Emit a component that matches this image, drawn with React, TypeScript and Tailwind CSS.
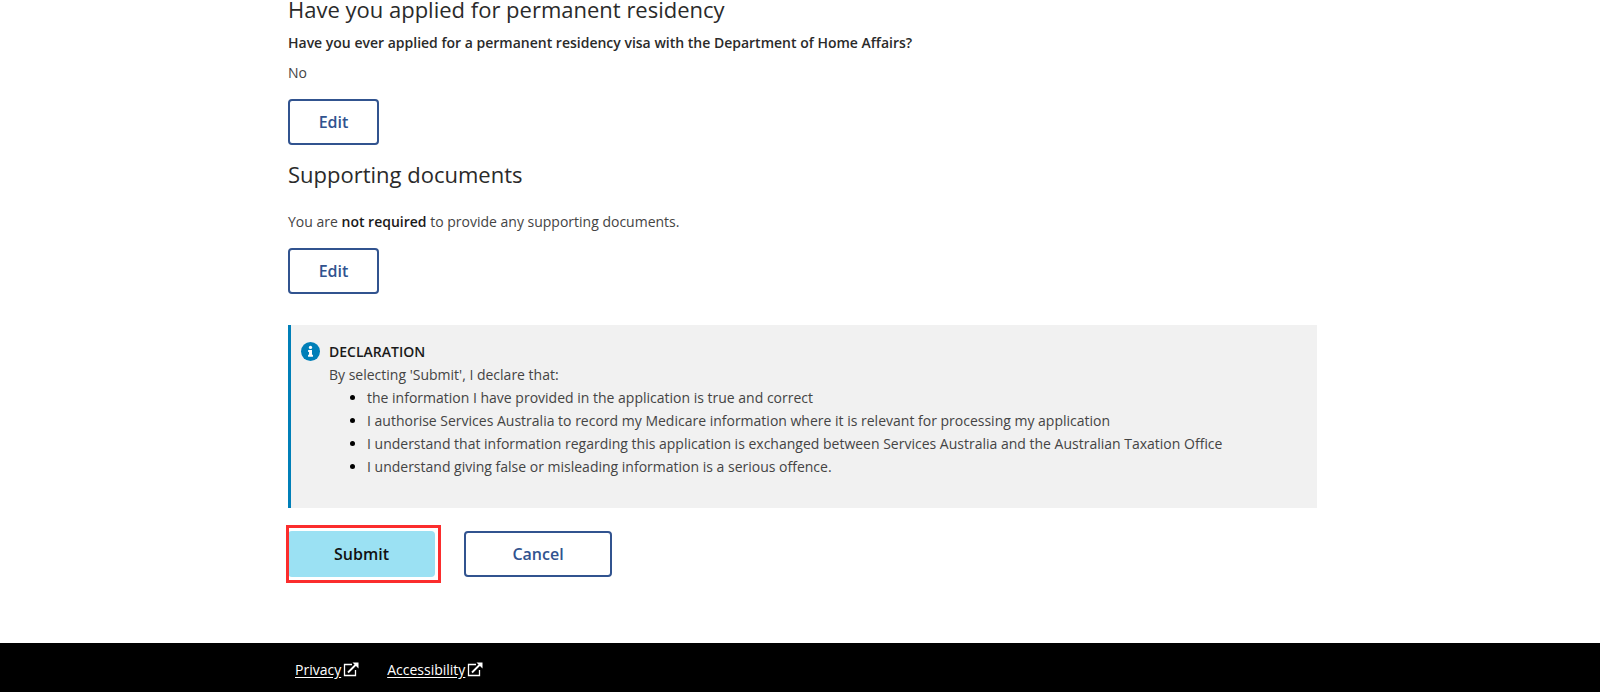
import type { ReactNode } from "react";

const declarations = [
  "the information I have provided in the application is true and correct",
  "I authorise Services Australia to record my Medicare information where it is relevant for processing my application",
  "I understand that information regarding this application is exchanged between Services Australia and the Australian Taxation Office",
  "I understand giving false or misleading information is a serious offence.",
];

const footerLinks = ["Privacy", "Accessibility"];

const OutlineButton = ({ children, wide = false }: { children: ReactNode; wide?: boolean }) => (
  <button
    type="button"
    className={`h-[46px] rounded-[4px] border-2 border-[#31538f] bg-white text-base font-semibold text-[#31538f] ${
      wide ? "w-[148px]" : "w-[91px]"
    }`}
  >
    {children}
  </button>
);

const InfoIcon = () => (
  <svg viewBox="0 0 512 512" className="h-[19px] w-[19px]" aria-hidden="true">
    <circle cx="256" cy="256" r="256" fill="#007fb8" />
    <circle cx="256" cy="145" r="44" fill="#fff" />
    <path d="M192 218h104v126h26v52H190v-52h26v-74h-24z" fill="#fff" />
  </svg>
);

const ExternalIcon = () => (
  <svg viewBox="0 0 16 16" className="h-4 w-4" fill="none" stroke="currentColor" aria-hidden="true">
    <path d="M9 2.5H1.5v11h11V8" strokeWidth="1.3" />
    <path d="M5 10.5 13 2.5" strokeWidth="1.8" />
    <path d="M9.5.5h6v6z" fill="currentColor" stroke="none" />
  </svg>
);

export default function App() {
  return (
    <div className="bg-white font-['Open_Sans','Noto_Sans',sans-serif] text-sm leading-[23px] text-[#444]">
      <main className="ml-[18%] mr-4 max-w-[1029px] pb-[66px]">
        <section className="mb-[15px]">
          <h2 className="mb-[13px] text-[22px] leading-[18px] text-[#2a2a2a]">
            Have you applied for permanent residency
          </h2>
          <p className="mb-[7px] font-semibold text-[#2a2a2a]">
            Have you ever applied for a permanent residency visa with the Department of Home Affairs?
          </p>
          <p className="mb-[15px]">No</p>
          <OutlineButton>Edit</OutlineButton>
        </section>

        <section className="mb-[31px]">
          <h2 className="mb-[22px] text-[22px] leading-[28px] text-[#2a2a2a]">Supporting documents</h2>
          <p className="mb-[15px]">
            You are <strong className="font-semibold text-[#1a1a1a]">not required</strong> to provide any
            supporting documents.
          </p>
          <OutlineButton>Edit</OutlineButton>
        </section>

        <section className="mb-[23px] flex border-l-[3px] border-[#007fb8] bg-[#f1f1f1] pt-[15px] pb-[30px] pl-[10px]">
          <div className="mr-[9px] flex h-[23px] shrink-0 items-center">
            <InfoIcon />
          </div>
          <div>
            <h3 className="font-semibold text-[#1a1a1a]">DECLARATION</h3>
            <p>By selecting 'Submit', I declare that:</p>
            <ul className="list-disc pl-[38px] marker:text-black">
              {declarations.map((text) => (
                <li key={text}>{text}</li>
              ))}
            </ul>
          </div>
        </section>

        <div className="flex gap-[29px]">
          <div className="relative">
            <button
              type="button"
              className="h-[46px] w-[147px] rounded-[4px] bg-[#9be1f3] text-base font-semibold text-[#111]"
            >
              Submit
            </button>
            {/* highlight frame drawn over the button */}
            <span className="pointer-events-none absolute -top-1.5 -right-1.5 -bottom-1.5 -left-0.5 border-3 border-[#fb2d2d]" />
          </div>
          <OutlineButton wide>Cancel</OutlineButton>
        </div>
      </main>

      <footer className="bg-black">
        <nav className="ml-[18%] flex gap-7 pt-[15px] pb-3 pl-[7px] text-white">
          {footerLinks.map((label) => (
            <a key={label} href="#" className="flex items-center gap-[2px]">
              <span className="underline underline-offset-2">{label}</span>
              <ExternalIcon />
            </a>
          ))}
        </nav>
      </footer>
    </div>
  );
}
